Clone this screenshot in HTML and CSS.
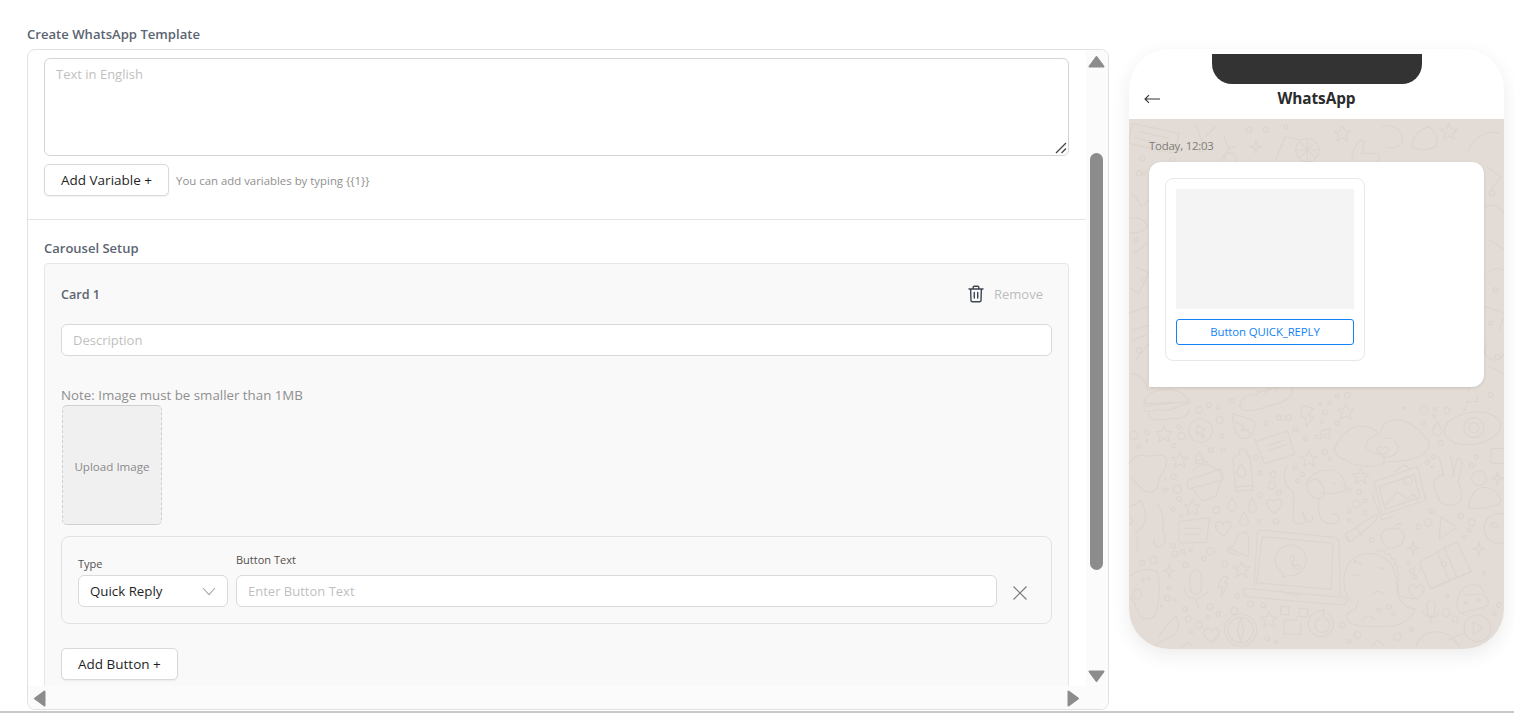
FILE: index.html
```html
<!DOCTYPE html>
<html lang="en">
<head>
<meta charset="utf-8">
<title>Create WhatsApp Template</title>
<link rel="stylesheet" href="styles.css">
</head>
<body>
<div class="page">
  <h1 class="page-title">Create WhatsApp Template</h1>
  <div class="columns">
    <section class="panel">
      <div class="viewport">
        <div class="text-block">
          <div class="textarea-wrap">
            <textarea class="textarea" placeholder="Text in English"></textarea>
            <svg class="grip" width="12" height="12" viewBox="0 0 12 12" fill="none" stroke="#444" stroke-width="1.3"><path d="M1 11L11 1M6.5 11L11 6.5"/></svg>
          </div>
          <div class="variable-row">
            <button class="btn">Add Variable +</button>
            <span class="hint">You can add variables by typing {{1}}</span>
          </div>
        </div>
        <div class="carousel">
          <h2 class="section-title">Carousel Setup</h2>
          <div class="card">
            <div class="card-head">
              <span class="card-title">Card 1</span>
              <span class="remove">
                <svg class="trash" width="16" height="18" viewBox="0 0 16 18" fill="none" stroke="#3c4654" stroke-width="1.4" stroke-linecap="round" stroke-linejoin="round"><path d="M1 4h14M5.2 4V2.2c0-.6.4-1 1-1h3.6c.6 0 1 .4 1 1V4M2.6 4l.4 11.4c0 .8.6 1.4 1.4 1.4h7.2c.8 0 1.4-.6 1.4-1.4L13.4 4M6.3 7.5v5.6M9.7 7.5v5.6"/></svg>
                <span class="remove-label">Remove</span>
              </span>
            </div>
            <input class="input desc" placeholder="Description">
            <p class="note">Note: Image must be smaller than 1MB</p>
            <div class="upload">Upload Image</div>
            <div class="button-box">
              <div class="field field-type">
                <label class="label">Type</label>
                <div class="select">
                  <span>Quick Reply</span>
                  <svg width="14" height="9" viewBox="0 0 14 9" fill="none" stroke="#a8a8a8" stroke-width="1.1"><path d="M1 1l6 6.6L13 1"/></svg>
                </div>
              </div>
              <div class="field field-text">
                <label class="label">Button Text</label>
                <input class="input" placeholder="Enter Button Text">
              </div>
              <svg class="close" width="16" height="16" viewBox="0 0 16 16" fill="none" stroke="#777" stroke-width="1.1"><path d="M1.5 1.5l13 13M14.5 1.5l-13 13"/></svg>
            </div>
            <button class="btn add-button">Add Button +</button>
          </div>
        </div>
      </div>
      <div class="vrail">
        <svg class="arrow" width="17" height="13" viewBox="0 0 17 13"><path d="M8.5 2L15.5 11.5H1.5Z" fill="#8c8c8c" stroke="#8c8c8c" stroke-width="2" stroke-linejoin="round"/></svg>
        <div class="vtrack"><div class="vthumb"></div></div>
        <svg class="arrow" width="17" height="13" viewBox="0 0 17 13"><path d="M8.5 11L15.5 1.5H1.5Z" fill="#8c8c8c" stroke="#8c8c8c" stroke-width="2" stroke-linejoin="round"/></svg>
      </div>
      <div class="hrail">
        <svg width="13" height="17" viewBox="0 0 13 17"><path d="M2 8.5L11.5 1.5V15.5Z" fill="#8c8c8c" stroke="#8c8c8c" stroke-width="2" stroke-linejoin="round"/></svg>
        <svg width="13" height="17" viewBox="0 0 13 17"><path d="M11 8.5L1.5 1.5V15.5Z" fill="#8c8c8c" stroke="#8c8c8c" stroke-width="2" stroke-linejoin="round"/></svg>
      </div>
      <div class="corner"></div>
    </section>

    <aside class="phone">
      <header class="phone-head">
        <div class="notch"></div>
        <div class="phone-bar">
          <svg class="back" width="16" height="10" viewBox="0 0 16 10" fill="none" stroke="#333" stroke-width="1.1"><path d="M16 5H1M5 1.2L1 5l4 3.8"/></svg>
          <span class="phone-title">WhatsApp</span>
        </div>
      </header>
      <div class="chat">
        <svg class="wallpaper" width="375" height="530" viewBox="0 -783 1125 1590" fill="none" stroke="#dcd4cd" stroke-width="3.6" stroke-linecap="round" stroke-linejoin="round">
          <defs>
            <path id="star" d="M0-24L7-8 25-7 11 5 16 23 0 13-16 23-11 5-25-7-7-8Z"/>
            <path id="heart" d="M0 22C-30 2-26-20-12-20-5-20 0-14 0-10 0-14 6-20 13-20 27-20 30 2 0 22Z"/>
            <path id="drop" d="M0-22C8-8 13-2 13 6A13 13 0 0 1-13 6C-13-2-8-8 0-22Z"/>
            <path id="spark" d="M0-20L4-4 18 0 4 4 0 20-4 4-18 0-4-4Z"/>
          </defs>
          <path d="M10-770l140 30-12 60-140-30zM30-745l90 20M25-725l90 20"/>
          <path d="M670-650c-5-30 5-40 15-60 8-14 22-10 20 6l-6 24h40c16 0 16 20 6 24"/>
          <circle cx="535" cy="-690" r="35"/><path d="M535-725v70M500-690h70M510-715l50 50M560-715l-50 50"/>
          <path d="M440-660l28-70 50 10" />
          <path d="M320-700c-25 0-35 20-32 40M285-730l15 40" />
          <circle cx="300" cy="-660" r="22"/><use href="#spark" x="380" y="-700"/><use href="#star" x="640" y="-740"/>
          <use href="#star" x="960" y="-745"/><path d="M1020-690c10-40 60-60 90-50M850-700c0-30 20-50 50-60 22 16 30 40 20 60-30 14-50 12-70 0z"/>
          <path d="M760-760c30-10 60 10 60 40 0 20-30 30-50 20M200-770l20 60M260-760l-30 30"/>
          <circle cx="360" cy="-750" r="8"/><circle cx="410" cy="-750" r="8"/><circle cx="470" cy="-760" r="6"/><circle cx="215" cy="-690" r="6"/><circle cx="130" cy="-660" r="8"/><circle cx="40" cy="-665" r="7"/>
          <path d="M10-560l30 40 20-20M-5-480c25-15 50-5 60 20-15 20-45 25-65 10M15-380l40-30M20-340l40 20-30 60-35-20M-5-200l60-20M10-150l50-15M10-120l40-14M20-60l40-50M5-20c25 0 45 20 50 50"/>
          <circle cx="30" cy="-620" r="8"/><circle cx="20" cy="-420" r="7"/><circle cx="45" cy="-300" r="7"/><circle cx="30" cy="-90" r="8"/><circle cx="45" cy="-620" r="5"/>
          <path d="M1075-640l40 30-30 40M1070-520c25-10 45 0 55 20M1080-420l50 30M1075-320c20-20 45-20 60 0M1070-220l60 20-20 50M1075-110a30 30 0 1 0 50 10M1080-40l45 20"/>
          <circle cx="1090" cy="-560" r="8"/><circle cx="1100" cy="-270" r="7"/><circle cx="1085" cy="-170" r="6"/><circle cx="1105" cy="-70" r="8"/>
          <path d="M45 70c5-30 45-46 80-42 28 4 50 20 55 38zM42 78l142-14M45 92c30 8 40-10 60-2 20 8 30-14 78-20M60 100c0 14 10 20 30 20l60-6c20-2 32-12 28-26"/>
          <path d="M345 90c-20-6-16-30 10-42l80-24c26-8 56-8 56 6 0 20-20 32-44 40l-60 18c-18 4-30 4-42 2zM380 50l12-20M410 42l10-20M440 34l6-14"/>
          <path d="M518 76l36 10-18 18 18 8-22 26-2-26-14-2z"/>
          <use href="#star" x="650" y="95"/>
          <path d="M310 100l65 22c8 30-6 50-30 54-20 0-32-30-35-76zM320 125l45 35M345 130l-8 22M358 150l-22 2M375 175l6 6"/>
          <circle cx="215" cy="152" r="35"/><path d="M205 135l22 14-10 4 10 18-8 2-8-16-8 6z"/>
          <use href="#star" x="105" y="162"/>
          <path d="M380 185l95-32 22 70-90 28zM415 198l50-18M420 212l50-18"/>
          <path d="M565 175c-8-4-4-12 6-10s10 10 2 12zM590 172c-8-4-4-12 6-10s10 10 2 12zM575 165l5-15 25-6-4 20M580 152l23-6"/>
          <path d="M765 250c-30 15-90 10-115-10-25-5-40-30-30-40 10-30 40-60 75-62 30 0 50 16 52 24M750 165c-20 0-35 16-40 30 0 16 20 24 50 30l8 22"/>
          <path d="M775 245c40 0 90-6 108-24 26-20 20-40 4-50-16-24-50-50-85-52-26 0-44 16-45 34M770 175c15-4 30 4 38 26 2 24-20 30-42 32"/>
          <path d="M762 205c-10-10-24 0-14 10l14 10 14-10c10-10-4-20-14-10z"/>
          <ellipse cx="1030" cy="145" rx="85" ry="48" transform="rotate(-8 1030 145)"/><circle cx="1035" cy="143" r="30"/><circle cx="1035" cy="143" r="15"/><path d="M1005 95l10-30h30v-20M1020 35l-2-20h20"/>
          <use href="#drop" x="925" y="148"/><circle cx="935" cy="190" r="8"/>
          <path d="M0 250c15-20 30-30 55-22 20 2 50-14 58 12 2 30-22 40-24 66-2 30-30 40-50 20-14-14-24-30-39-34"/>
          <path d="M180 300l92-32c10 2 14 30 4 34l-94 24c-10-2-10-22-2-26zM190 325l30 38 40-14 16-48M190 275c10-20 50-30 65-10 12 2 24 10 20 26M200 245c10-10 30-6 40 8M208 215c-6 14-10 22-8 32 6 6 20 6 26-2-4-12-10-22-18-30z"/>
          <path d="M312 235c6-8 16-10 20-12v-16h16l6 16c6 4 8 10 10 16l8 90-52 6zM318 322l50-6"/><use href="#drop" x="337" y="272"/>
          <use href="#star" x="152" y="240"/><use href="#star" x="540" y="236"/>
          <path d="M475 258c-18 30-10 60 18 78 4 20-2 60 0 90 16 10 30 8 36-4l-10-28 16 30c10 8 20-6 14-14M570 355c-4 24 0 50 8 66 20 16 50 10 52-4 2-8-6-16-18-14M530 320c0-24 30-50 70-50 30 0 46 22 46 42 10 8 4 24-10 24-20 6-40 6-60 2"/><path d="M560 296c-20 4-30 24-22 40 8 16 30 24 42 16 14-12-2-52-20-56z"/><circle cx="615" cy="310" r="2"/>
          <use href="#star" x="695" y="288"/>
          <path d="M735 305l130-45 25 100-130 45zM750 320l105-36 18 68-105 36zM770 375l35-40 30 22 20-14 15 28M795 275l30-20 20 12M728 340l30 80 35-12"/><circle cx="838" cy="302" r="12"/>
          <path d="M945 290l-15-60M975 290l-10-60M970 290l15-55c16 0 18 16 14 22l-12 50c14 24 16 50 0 62-20 12-50 8-58-12-6-14-16-30-16-44 0-12 14-24 30-30"/>
          <circle cx="1050" cy="295" r="22"/><path d="M1020 385c0-30 14-50 30-60 30-10 60 10 66 40-10 14-60 24-96 20z"/>
          <use href="#spark" x="1105" y="295"/>
          <rect x="1085" y="205" width="50" height="45" rx="8"/>
          <use href="#drop" x="310" y="375"/><use href="#drop" x="370" y="378"/><use href="#drop" x="345" y="418"/>
          <use href="#heart" x="436" y="378"/><use href="#star" x="190" y="382"/>
          <path d="M-5 380c15 0 30-10 40-20 6 14 16 30 14 50 0 20-12 40-32 50M85 372c18 20 20 60 16 80 14 20 10 40-10 50-14 0-20-14-14-24M25 510v-40M0 410c14 4 16 20 2 24"/>
          <path d="M150 425l92-12-10 74-70 2c-8 0-12-4-12-10zM165 445h50M165 462h45"/>
          <use href="#heart" x="282" y="445"/>
          <path d="M298 505c20-2 26-30 30-40 8-10 24-10 30 0l2 64zM330 525c-10 0-40-10-32-20M345 458l8-6"/>
          <path d="M375 620l10-160c2-8 6-10 14-10l215 22c10 2 16 6 16 14l4 160"/>
          <path d="M400 470l212 20-6 138-224-20z"/>
          <path d="M345 625l305 28c8 10 0 22-10 22l-280-24c-14-4-26-16-15-26zM460 632c14 14 50 16 62 8"/>
          <path d="M465 582l-6 10 18-6a46 46 0 1 0-12-4z"/><path d="M485 530c-4 14 8 36 24 40l8-8-12-8-4 4c-6-2-10-10-10-16l6-3-2-12z"/>
          <path d="M650 462l78-50 16-8-4 20-76 62zM650 462c-4 8 6 24 14 24M680 442l20 26"/>
          <path d="M790 448c-24-10-36 14-32 30 4 14 20 32 32 26 14 4 34-14 36-32 0-18-20-30-36-24zM792 446c4-10 12-16 26-14-2 10-12 16-26 14z"/>
          <use href="#spark" x="852" y="504"/><use href="#spark" x="1050" y="506"/><use href="#spark" x="120" y="572"/>
          <path d="M935 410l48 32-52 36z"/>
          <circle cx="1110" cy="445" r="45"/><path d="M1085 432c10-6 20-4 24 6-6 8-18 8-24-6z"/>
          <path d="M665 660c-20-20-30-70-6-110 20-30 70-40 110-14 30 20 34 60 36 100 6 30 26 50 54 50-10 30-40 50-70 52-50 4-110 4-130-14-14-12-2-34 20-34l10-34"/><path d="M740 510l16 6 8-6 6 14 14-4 2 16 14 2-4 14 12 8-6 10 8 10-6 10 6 12-6 10 6 12-4 12 6 10 12 8 14-2 10 4 14-2"/>
          <path d="M670 580c4 10 20 10 26 2M735 640c10-10 24-6 28 4M745 562l18 4M700 720c10-16 30-14 36 0"/><circle cx="678" cy="546" r="4"/><circle cx="695" cy="550" r="4"/>
          <path d="M870 545l115-60 40 90-120 50zM925 515l35 85M945 500l38 90M900 612l8 14 118-50-2-18M880 565l-8 6"/><circle cx="945" cy="552" r="8"/>
          <path d="M990 645c6-20 30-34 50-30 16 0 26 16 24 30 14 6 18 24 10 34l-76 20c-14-2-20-30-8-54zM1000 645l55-2M1000 700l6 6M1060 685l6 6"/><circle cx="1010" cy="668" r="4"/><circle cx="1050" cy="660" r="4"/>
          <path d="M0 590c20-20 60-30 85-14 10 40 6 90-8 130-12 14-30 14-42 6-10-20-14-40-30-60"/><circle cx="24" cy="642" r="14"/><circle cx="42" cy="600" r="4"/><circle cx="60" cy="596" r="4"/>
          <rect x="183" y="570" width="34" height="72" rx="17"/><path d="M165 620c0 40 50 50 70 14M200 660l10 24"/>
          <path d="M280 590l-14 30 14 2-4 30 22-42-12-2 12-18z"/><use href="#star" x="338" y="568"/>
          <use href="#heart" x="862" y="635"/>
          <rect x="895" y="660" width="22" height="50" rx="11"/><path d="M880 690c4 24 40 30 50 8M905 712v18"/>
          <circle cx="335" cy="750" r="48"/><circle cx="335" cy="750" r="38"/><path d="M335 715l10 35-10 35-10-35z"/><circle cx="316" cy="693" r="10"/>
          <use href="#star" x="420" y="718"/>
          <path d="M455 680h24v24h-24zM510 685h26v25h-26zM470 720h32v-12M465 722v40h50v-32"/>
          <path d="M565 695a38 38 0 1 0 30 4M565 695l22-6-6 22M572 715a22 22 0 1 0 16 0"/>
          <circle cx="1045" cy="745" r="40"/><path d="M1033 726l28 18-28 20z"/>
          <use href="#heart" x="247" y="765"/>
          <path d="M860 800c10-30 40-50 70-44 20 0 50 20 60 44M960 780l40-20M90 770c10-20 30-40 50-60 10 14 14 34 0 50-10 14-30 10-60 36M160 800l20-14 10 14M730 800l16-22 20 20"/>
          <g>
            <circle cx="210" cy="90" r="10"/><circle cx="240" cy="75" r="7"/><circle cx="268" cy="82" r="6"/><circle cx="308" cy="62" r="7"/><circle cx="272" cy="120" r="10"/><circle cx="279" cy="168" r="6"/><circle cx="412" cy="130" r="7"/><circle cx="450" cy="114" r="7"/><circle cx="478" cy="114" r="8"/><circle cx="500" cy="148" r="7"/><circle cx="530" cy="175" r="6"/><circle cx="574" cy="72" r="5"/><circle cx="600" cy="68" r="5"/><circle cx="588" cy="97" r="7"/><circle cx="580" cy="125" r="5"/><circle cx="626" cy="130" r="7"/><circle cx="625" cy="46" r="6"/><circle cx="655" cy="46" r="9"/>
            <circle cx="885" cy="90" r="12"/><circle cx="918" cy="88" r="5"/><circle cx="954" cy="92" r="9"/><circle cx="825" cy="85" r="4"/><circle cx="883" cy="130" r="6"/><circle cx="915" cy="108" r="5"/><circle cx="1085" cy="44" r="7"/>
            <circle cx="14" cy="166" r="12"/><circle cx="54" cy="157" r="7"/><circle cx="54" cy="182" r="3"/><circle cx="30" cy="198" r="6"/><circle cx="150" cy="140" r="6"/><circle cx="157" cy="168" r="11"/><circle cx="135" cy="197" r="6"/><circle cx="245" cy="210" r="7"/><circle cx="283" cy="210" r="6"/><circle cx="380" cy="232" r="7"/>
            <circle cx="134" cy="290" r="8"/><circle cx="110" cy="298" r="3"/><circle cx="145" cy="328" r="12"/><circle cx="108" cy="330" r="6"/><circle cx="150" cy="356" r="7"/><circle cx="132" cy="388" r="6"/><circle cx="156" cy="408" r="5"/><circle cx="262" cy="390" r="10"/>
            <circle cx="392" cy="278" r="6"/><circle cx="432" cy="284" r="9"/><circle cx="428" cy="316" r="11"/><circle cx="450" cy="338" r="7"/><circle cx="392" cy="346" r="7"/><circle cx="442" cy="424" r="8"/><circle cx="390" cy="424" r="5"/><circle cx="520" cy="283" r="6"/><circle cx="505" cy="302" r="6"/><circle cx="498" cy="262" r="6"/><circle cx="602" cy="238" r="5"/><circle cx="587" cy="216" r="8"/>
            <circle cx="660" cy="330" r="6"/><circle cx="690" cy="336" r="7"/><circle cx="682" cy="372" r="11"/><circle cx="708" cy="362" r="6"/><circle cx="660" cy="394" r="6"/><circle cx="708" cy="398" r="6"/><circle cx="660" cy="420" r="5"/>
            <circle cx="895" cy="247" r="6"/><circle cx="914" cy="230" r="6"/><circle cx="910" cy="260" r="3"/><circle cx="1028" cy="257" r="7"/><circle cx="1042" cy="230" r="6"/><circle cx="908" cy="393" r="7"/><circle cx="995" cy="408" r="8"/><circle cx="898" cy="428" r="11"/><circle cx="868" cy="440" r="7"/><circle cx="1028" cy="428" r="10"/><circle cx="1020" cy="450" r="6"/><circle cx="1005" cy="470" r="5"/><circle cx="728" cy="480" r="7"/>
            <circle cx="133" cy="497" r="6"/><circle cx="138" cy="522" r="9"/><circle cx="162" cy="515" r="6"/><circle cx="185" cy="510" r="5"/><circle cx="245" cy="514" r="11"/><circle cx="170" cy="555" r="8"/><circle cx="225" cy="535" r="7"/><circle cx="288" cy="552" r="9"/><circle cx="40" cy="548" r="7"/><circle cx="74" cy="540" r="11"/>
            <circle cx="115" cy="655" r="8"/><circle cx="136" cy="660" r="5"/><circle cx="120" cy="624" r="5"/><circle cx="98" cy="678" r="3"/><circle cx="168" cy="688" r="7"/><circle cx="243" cy="680" r="9"/><circle cx="268" cy="702" r="7"/><circle cx="237" cy="712" r="6"/><circle cx="178" cy="717" r="9"/><circle cx="210" cy="735" r="10"/><circle cx="187" cy="755" r="5"/><circle cx="324" cy="648" r="7"/><circle cx="365" cy="672" r="9"/><circle cx="402" cy="676" r="7"/><circle cx="415" cy="775" r="7"/><circle cx="442" cy="785" r="5"/>
            <circle cx="640" cy="735" r="8"/><circle cx="685" cy="765" r="10"/><circle cx="660" cy="785" r="6"/><circle cx="850" cy="572" r="7"/><circle cx="856" cy="590" r="6"/><circle cx="838" cy="548" r="5"/><circle cx="805" cy="770" r="11"/><circle cx="848" cy="748" r="6"/><circle cx="780" cy="680" r="7"/><circle cx="750" cy="690" r="6"/><circle cx="792" cy="702" r="5"/><circle cx="955" cy="648" r="5"/><circle cx="952" cy="698" r="11"/><circle cx="978" cy="717" r="9"/><circle cx="1065" cy="578" r="5"/><circle cx="1110" cy="675" r="7"/><circle cx="1095" cy="700" r="6"/>
          </g>
        </svg>
        <div class="stamp">Today, 12:03</div>
        <div class="bubble">
          <div class="tile">
            <div class="tile-image"></div>
            <div class="tile-button">Button QUICK_REPLY</div>
          </div>
        </div>
      </div>
    </aside>
  </div>
</div>
</body>
</html>
```
FILE: styles.css
```css
* { box-sizing: border-box; }
html, body { margin: 0; height: 714px; overflow: hidden; background: #fff; }
body { font-family: "Open Sans", "Noto Sans", "Liberation Sans", sans-serif; color: #222; }

.page { height: 713px; padding: 26px 0 0 27px; border-bottom: 2px solid #c9c9c9; display: flex; flex-direction: column; }
.page-title { margin: 0 0 6px; font-size: 13.1px; line-height: 17px; font-weight: 600; color: #5b6470; }
.columns { display: flex; gap: 20px; align-items: flex-start; }

.panel { width: 1082px; height: 661px; border: 1px solid #e2e2e2; border-radius: 8px; display: grid; grid-template-columns: 1058px 22px; grid-template-rows: 636px 23px; overflow: hidden; background: #fff; }
.viewport { overflow: hidden; }
.vrail { background: #fbfbfb; display: flex; flex-direction: column; align-items: center; padding: 5px 1px 3px 0; }
.vtrack { flex: 1; width: 13px; padding-top: 85px; }
.vthumb { width: 13px; height: 417px; border-radius: 7px; background: #8c8c8c; }
.arrow { flex: none; }
.hrail { background: #fbfbfb; display: flex; justify-content: space-between; align-items: center; padding: 2px 6px 0 5px; }
.corner { background: #fbfbfb; }

.text-block { padding: 8px 16px 23px; border-bottom: 1px solid #e5e5e5; }
.textarea-wrap { position: relative; width: 1025px; height: 98px; }
.textarea { display: block; width: 100%; height: 100%; resize: none; border: 1px solid #d4d4d4; border-radius: 6px; padding: 5px 11px; font: 13px/20px "Open Sans", sans-serif; background: #fff; outline: 0; }
.grip { position: absolute; right: 2px; bottom: 2px; }
.textarea::placeholder, .input::placeholder { color: #bfbfbf; opacity: 1; }
.variable-row { display: flex; align-items: center; gap: 7px; margin-top: 8px; }
.btn { height: 32px; border: 1px solid #d9d9d9; border-radius: 5px; background: #fff; box-shadow: 0 1px 2px rgba(0,0,0,.06); font: 13.5px "Open Sans", sans-serif; color: #1f1f1f; padding: 0 16px; }
.hint { font-size: 11.4px; color: #8f8f8f; }

.carousel { padding: 20px 16px 0; }
.section-title { margin: 0 0 6px; font-size: 13px; line-height: 17px; font-weight: 600; color: #5b6470; }
.card { width: 1025px; height: 440px; background: #f9f9f9; border: 1px solid #e6e6e6; border-radius: 4px 4px 0 0; padding: 16px 16px 0; }
.card-head { display: flex; justify-content: space-between; align-items: center; height: 28px; margin-bottom: 16px; padding-right: 9px; }
.card-title { font-size: 12.6px; font-weight: 600; color: #5b6470; }
.remove { display: flex; align-items: center; gap: 10px; }
.trash { display: block; }
.remove-label { font-size: 13px; color: #bdbdbd; }
.input { width: 100%; height: 32px; display: block; border: 1px solid #d9d9d9; border-radius: 6px; padding: 0 11px; font: 13px "Open Sans", sans-serif; background: #fff; outline: 0; }
.desc { width: 991px; }
.note { margin: 30px 0 0; font-size: 13.3px; line-height: 18px; color: #8f8f8f; height: 19px; }
.upload { width: 100px; height: 120px; margin-left: 1px; padding-top: 2px; display: flex; align-items: center; justify-content: center; background: #f0f0f0; border: 1px dashed #d0d0d0; border-top-style: solid; border-bottom-style: solid; border-radius: 5px; font-size: 11.6px; color: #8a8a8a; }
.button-box { width: 991px; height: 88px; margin-top: 11px; border: 1px solid #e2e2e2; border-radius: 8px; display: flex; align-items: flex-end; gap: 8px; padding: 0 16px 16px; }
.field { display: flex; flex-direction: column; }
.field-type { width: 150px; }
.field-text { width: 761px; }
.label { font-size: 11px; line-height: 15px; color: #55504c; }
.field-type .label { margin-bottom: 4px; }
.field-text .label { margin-bottom: 8px; }
.select { height: 32px; background: #fff; border: 1px solid #d9d9d9; border-radius: 6px; display: flex; align-items: center; justify-content: space-between; padding: 0 11px; font-size: 13.3px; color: #1f1f1f; }
.close { margin: 0 0 6px 7px; flex: none; }
.add-button { margin-top: 24px; }

.phone { width: 375px; height: 600px; border-radius: 40px; overflow: hidden; background: #fff; box-shadow: 0 6px 20px rgba(0,0,0,.08); display: flex; flex-direction: column; }
.phone-head { height: 70px; padding-top: 5px; flex: none; }
.notch { width: 210px; height: 30px; margin: 0 auto; background: #333; border-radius: 0 0 20px 20px; }
.phone-bar { position: relative; height: 30px; display: flex; align-items: center; justify-content: center; }
.back { position: absolute; left: 15px; top: 10px; }
.phone-title { font-size: 15.4px; font-weight: 700; color: #2b2b2b; margin-top: -1px; letter-spacing: -.1px; }
.chat { position: relative; flex: 1; background: #e3dcd6; padding: 20px 20px 0; }
.wallpaper { position: absolute; left: 0; top: 0; }
.stamp { position: relative; font-size: 11.4px; line-height: 14px; height: 23px; color: #807b76; letter-spacing: -.2px; }
.bubble { position: relative; width: 335px; height: 225px; background: #fff; border-radius: 12px 12px 12px 0; box-shadow: 0 1px 3px rgba(0,0,0,.12); padding: 16px; }
.tile { width: 200px; height: 183px; border: 1px solid #e8e8e8; border-radius: 8px; padding: 10px; }
.tile-image { width: 178px; height: 120px; background: #f4f4f4; }
.tile-button { margin-top: 10px; height: 26px; padding-bottom: 2px; border: 1px solid #1283f5; border-radius: 3px; display: flex; align-items: center; justify-content: center; font-size: 11.4px; color: #1283f5; letter-spacing: -.1px; }
```
